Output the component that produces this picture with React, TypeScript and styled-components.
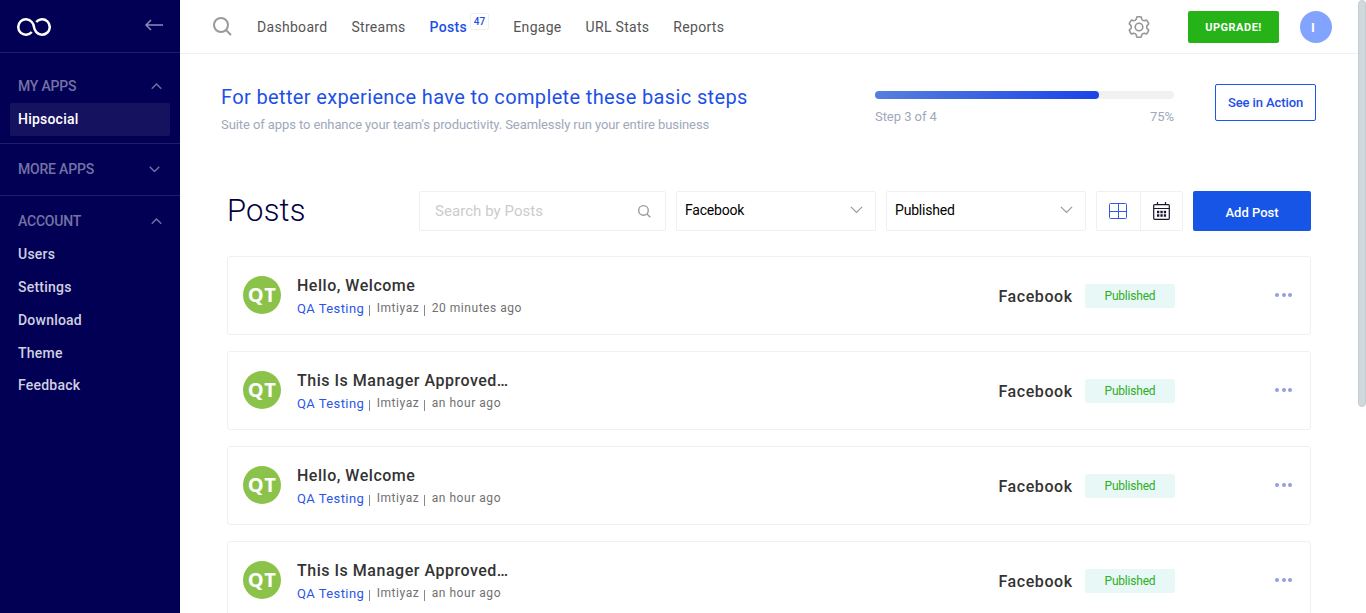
import React from 'react';
import styled, { createGlobalStyle } from 'styled-components';

const GlobalStyle = createGlobalStyle`
  * { box-sizing: border-box; }
  html, body { margin: 0; padding: 0; overflow: hidden; background: #fff; }
  body { font-family: Roboto, "Liberation Sans", sans-serif; font-size: 14px; color: #333; }
  svg { display: block; flex: none; }
  button { font-family: inherit; cursor: pointer; padding: 0; }
`;

const Page = styled.div`
  display: flex;
  width: 100%;
  height: 613px;
  overflow: hidden;
`;

/* Sidebar */
const Sidebar = styled.aside`
  width: 180px;
  flex: none;
  background: #020055;
`;
const Brand = styled.div`
  height: 53px;
  padding: 2px 17px 0;
  display: flex;
  justify-content: space-between;
  align-items: center;
  border-bottom: 1px solid #201e6b;
  svg + svg { margin-bottom: 4px; }
`;
const Section = styled.section<{ $top: number; $height?: number }>`
  height: ${p => (p.$height ? p.$height + 'px' : 'auto')};
  padding: ${p => p.$top}px 10px 0;
  border-bottom: ${p => (p.$height ? '1px solid #201e6b' : 'none')};
`;
const SectionHead = styled.div<{ $closed?: boolean }>`
  height: 33px;
  padding: 0 ${p => (p.$closed ? 10 : 8)}px 1px 8px;
  display: flex;
  justify-content: space-between;
  align-items: center;
  font-weight: 500;
  letter-spacing: -0.2px;
  color: #7472a3;
`;
const SideLink = styled.a<{ $active?: boolean }>`
  display: flex;
  align-items: center;
  height: ${p => (p.$active ? 33 : 32.75)}px;
  padding: 0 8px ${p => (p.$active ? 2 : 0)}px;
  border-radius: 2px;
  font-weight: 500;
  letter-spacing: 0.22px;
  color: ${p => (p.$active ? '#fff' : '#d0d0e0')};
  background: ${p => (p.$active ? '#151360' : 'transparent')};
`;

/* Main column */
const Main = styled.main`
  flex: 1;
  min-width: 0;
`;
const TopBar = styled.header`
  height: 54px;
  padding: 0 26px 0 33px;
  display: flex;
  align-items: center;
  border-bottom: 1px solid #f0f0f0;
`;
const Nav = styled.nav`
  display: flex;
  gap: 24px;
  margin-left: 25px;
  flex: 1;
`;
const NavItem = styled.a<{ $active?: boolean }>`
  display: flex;
  line-height: 20px;
  letter-spacing: 0.3px;
  font-weight: ${p => (p.$active ? 500 : 400)};
  color: ${p => (p.$active ? '#1e50e6' : '#555')};
`;
const Count = styled.span`
  width: 19px;
  height: 17px;
  margin: -4px 0.4px 0 3px;
  border: 1px solid #f0f0f0;
  border-radius: 2px;
  font-size: 10px;
  line-height: 16px;
  text-align: center;
  letter-spacing: 0;
`;
const UpgradeButton = styled.button`
  width: 91px;
  height: 32px;
  margin: 0 21px 0 38px;
  padding-top: 1px;
  border: 0;
  border-radius: 2px;
  background: #25b317;
  color: #fff;
  font-size: 11px;
  font-weight: 700;
  letter-spacing: 0.5px;
`;
const UserAvatar = styled.div`
  width: 32px;
  height: 32px;
  padding-right: 6px;
  border-radius: 50%;
  background: #82a4ff;
  color: #fff;
  font-size: 13px;
  font-weight: 700;
  line-height: 33px;
  text-align: center;
`;

const Onboarding = styled.section`
  display: flex;
  height: 137px;
  padding: 30px 42px 0 41px;
`;
const Intro = styled.div`
  width: 654px;
`;
const IntroTitle = styled.h2`
  margin: 0;
  font-size: 20px;
  line-height: 26px;
  font-weight: 400;
  letter-spacing: 0.36px;
  color: #1e50e6;
`;
const IntroText = styled.p`
  margin: 5px 0 0;
  font-size: 13px;
  line-height: 20px;
  letter-spacing: -0.09px;
  color: #a0a8bb;
`;
const Progress = styled.div`
  width: 299px;
  padding-top: 7px;
`;
const Track = styled.div`
  height: 8px;
  border-radius: 4px;
  background: #f1f1f1;
`;
const Fill = styled.div`
  width: 75%;
  height: 8px;
  border-radius: 4px;
  background: linear-gradient(135deg, #5681dc, #1a43e9);
`;
const ProgressLabels = styled.div`
  display: flex;
  justify-content: space-between;
  margin-top: 8px;
  font-size: 13px;
  line-height: 20px;
  letter-spacing: -0.05px;
  color: #a0a8bb;
`;
const ActionButton = styled.button`
  width: 101px;
  height: 37px;
  margin-left: 41px;
  border: 1px solid #1a56e8;
  border-radius: 2px;
  background: #fff;
  color: #1e50e6;
  font-size: 13px;
  font-weight: 500;
  letter-spacing: -0.1px;
`;

const Toolbar = styled.div`
  display: flex;
  align-items: center;
  height: 40px;
  padding: 0 47px;
`;
const Heading = styled.h1`
  width: 192px;
  margin: 0;
  padding-bottom: 1px;
  font-size: 31px;
  line-height: 39px;
  font-weight: 300;
  letter-spacing: 0.2px;
  color: #020042;
`;
const Field = styled.div<{ $width: number; $search?: boolean }>`
  width: ${p => p.$width}px;
  height: 40px;
  margin-right: 10px;
  padding: ${p => (p.$search ? '0 14px 0 15px' : '0 12px 2px 8px')};
  display: flex;
  justify-content: space-between;
  align-items: center;
  border: 1px solid #f0f0f0;
  border-radius: 2px;
  font-size: ${p => (p.$search ? 15 : 14)}px;
  letter-spacing: ${p => (p.$search ? 0.05 : -0.2)}px;
  color: ${p => (p.$search ? '#ccc' : '#000')};
`;
const ViewToggle = styled.div`
  display: flex;
  width: 87px;
  height: 40px;
  margin-right: 10px;
  border: 1px solid #f0f0f0;
  border-radius: 2px;
`;
const ViewOption = styled.span`
  width: 43px;
  padding: 0 1px 1px 0;
  display: flex;
  align-items: center;
  justify-content: center;
  & + & { width: 42px; padding: 0; border-left: 1px solid #f0f0f0; }
`;
const AddButton = styled.button`
  width: 118px;
  height: 40px;
  padding-top: 2px;
  border: 0;
  border-radius: 2px;
  background: #1655e6;
  color: #fff;
  font-size: 13px;
  font-weight: 500;
`;

const PostList = styled.div`
  display: flex;
  flex-direction: column;
  gap: 16px;
  padding: 25px 47px 0;
`;
const PostCard = styled.article`
  display: flex;
  height: 79px;
  padding: 0 18px 0 15px;
  border: 1px solid #f0f0f0;
  border-radius: 3px;
`;
const Avatar = styled.div`
  width: 38px;
  height: 38px;
  margin: 19px 16px 0 0;
  border-radius: 50%;
  background: #8bc34a;
  color: #fff;
  font: 700 20px/38px "Open Sans", sans-serif;
  letter-spacing: 0.4px;
  text-align: center;
`;
const PostBody = styled.div`
  width: 701px;
  padding-top: 18px;
`;
const PostTitle = styled.div`
  font-size: 16px;
  line-height: 22px;
  letter-spacing: 0.52px;
  font-weight: 500;
  color: #333;
`;
const Meta = styled.div`
  display: flex;
  padding-top: 1px;
  font-size: 12px;
  line-height: 20px;
  letter-spacing: 0.54px;
  color: #707070;
  white-space: pre;
`;
const Account = styled.span`
  padding-top: 1px;
  font-size: 13px;
  letter-spacing: 0.42px;
  color: #2a55e8;
`;
const Divider = styled.i`
  width: 1px;
  height: 11px;
  margin: 7px 6.5px 0 5px;
  background: #888;
`;
const Channel = styled.div`
  width: 87px;
  padding: 29px 0 0 0.4px;
  font-size: 16px;
  line-height: 22px;
  letter-spacing: 0.58px;
  font-weight: 500;
`;
const Status = styled.div`
  width: 90px;
  height: 24px;
  margin-top: 27px;
  border-radius: 3px;
  background: #e8f8f7;
  color: #2eae22;
  font-size: 12px;
  line-height: 24px;
  letter-spacing: -0.2px;
  text-align: center;
`;
const More = styled.div`
  display: flex;
  gap: 2.4px;
  margin: 36px 0 0 auto;
`;
const Dot = styled.i`
  width: 4px;
  height: 4px;
  border-radius: 50%;
  background: #939fdf;
`;
const ScrollThumb = styled.div`
  width: 8px;
  height: 407px;
  flex: none;
  border: 1px solid #c5cdd1;
  border-radius: 4px;
  background: #cfd8dc;
`;

const Chevron = ({ up, width = 11, color }: { up?: boolean; width?: number; color: string }) => (
  <svg width={width} height={width / 2 + 1} viewBox="0 0 12 7" fill="none" stroke={color} strokeWidth={width > 11 ? 1.1 : 1.5}>
    <path d={up ? 'M.8 6.2 6 1l5.2 5.2' : 'M.8.8 6 6 11.2.8'} />
  </svg>
);

const Magnifier = ({ size }: { size: number }) => (
  <svg width={size} height={size} viewBox="0 0 19 19" fill="none" stroke="#999" strokeWidth="2">
    <circle cx="8" cy="8" r="7" />
    <path d="m13 13 5 5" />
  </svg>
);

const Logo = () => (
  <svg width="34" height="18" viewBox="0 0 34 18" fill="none" stroke="#fff" strokeWidth="2.5">
    <path d="M14.8 14A7.7 7.7 0 1 1 14.8 4C16.5 5.8 16.7 7.4 17 9.1c.3 1.7.6 3.2 2.3 5A7.7 7.7 0 1 0 19.2 4" />
  </svg>
);

const BackArrow = () => (
  <svg width="18" height="12" viewBox="0 0 18 12" fill="none" stroke="#8d8bb8" strokeWidth="1.5">
    <path d="M18 6H1M6 1 1 6l5 5" />
  </svg>
);

/* Six rounded teeth around a hub */
const gearPoint = (radius: number, degrees: number) => {
  const a = (degrees * Math.PI) / 180;
  return `${(11 + radius * Math.sin(a)).toFixed(2)} ${(11 - radius * Math.cos(a)).toFixed(2)}`;
};
const gearPath =
  [0, 60, 120, 180, 240, 300]
    .map((t, i) =>
      [
        `${i ? 'L' : 'M'}${gearPoint(8.3, t - 19)}`,
        `L${gearPoint(10.2, t - 13)}`,
        `Q${gearPoint(10.5, t)} ${gearPoint(10.2, t + 13)}`,
        `L${gearPoint(8.3, t + 19)}`,
        `Q${gearPoint(7.2, t + 30)} ${gearPoint(8.3, t + 41)}`,
      ].join(''),
    )
    .join('') + 'Z';

const Gear = () => (
  <svg width="22" height="22" viewBox="0 0 22 22" fill="none" stroke="#969696" strokeWidth="1.6" strokeLinejoin="round">
    <path d={gearPath} />
    <circle cx="11" cy="11" r="3.8" />
  </svg>
);

const GridIcon = () => (
  <svg width="18" height="16" viewBox="0 0 18 16" fill="none" stroke="#3559df" strokeWidth="1">
    <rect x=".5" y=".5" width="17" height="15" rx="1" />
    <path d="M9.5.5v15M.5 8.5h17" />
  </svg>
);

const CalendarIcon = () => (
  <svg width="17" height="18" viewBox="0 0 17 18" fill="none" stroke="#17152f" strokeWidth="1.2">
    <rect x=".7" y="2.6" width="15.6" height="14.7" rx="1" />
    <path d="M.7 6.5h15.6M4.5 0v3M12.5 0v3" />
    <path d="M4 10h2.3M7.4 10h2.3M10.8 10h2.3M4 13.5h2.3M7.4 13.5h2.3M10.8 13.5h2.3" strokeWidth="2.3" />
  </svg>
);

const navItems = ['Dashboard', 'Streams', 'Posts', 'Engage', 'URL Stats', 'Reports'];
const accountLinks = ['Users', 'Settings', 'Download', 'Theme', 'Feedback'];
const posts = [
  { title: 'Hello, Welcome', time: '20 minutes ago' },
  { title: 'This Is Manager Approved…', time: 'an hour ago' },
  { title: 'Hello, Welcome', time: 'an hour ago' },
  { title: 'This Is Manager Approved…', time: 'an hour ago' },
];

export default function App() {
  return (
    <Page>
      <GlobalStyle />
      <Sidebar>
        <Brand><Logo /><BackArrow /></Brand>
        <Section $top={17} $height={91}>
          <SectionHead>MY APPS<Chevron up color="#7472a3" /></SectionHead>
          <SideLink $active>Hipsocial</SideLink>
        </Section>
        <Section $top={9} $height={52}>
          <SectionHead $closed>MORE APPS<Chevron color="#7472a3" /></SectionHead>
        </Section>
        <Section $top={9}>
          <SectionHead>ACCOUNT<Chevron up color="#7472a3" /></SectionHead>
          {accountLinks.map(l => <SideLink key={l}>{l}</SideLink>)}
        </Section>
      </Sidebar>
      <Main>
        <TopBar>
          <Magnifier size={19} />
          <Nav>
            {navItems.map(n => (
              <NavItem key={n} $active={n === 'Posts'}>{n}{n === 'Posts' && <Count>47</Count>}</NavItem>
            ))}
          </Nav>
          <Gear />
          <UpgradeButton>UPGRADE!</UpgradeButton>
          <UserAvatar>I</UserAvatar>
        </TopBar>
        <Onboarding>
          <Intro>
            <IntroTitle>For better experience have to complete these basic steps</IntroTitle>
            <IntroText>Suite of apps to enhance your team's productivity. Seamlessly run your entire business</IntroText>
          </Intro>
          <Progress>
            <Track><Fill /></Track>
            <ProgressLabels><span>Step 3 of 4</span><span>75%</span></ProgressLabels>
          </Progress>
          <ActionButton>See in Action</ActionButton>
        </Onboarding>
        <Toolbar>
          <Heading>Posts</Heading>
          <Field $width={247} $search>Search by Posts<Magnifier size={13} /></Field>
          <Field $width={200}>Facebook<Chevron width={13} color="#999" /></Field>
          <Field $width={200}>Published<Chevron width={13} color="#999" /></Field>
          <ViewToggle>
            <ViewOption><GridIcon /></ViewOption>
            <ViewOption><CalendarIcon /></ViewOption>
          </ViewToggle>
          <AddButton>Add Post</AddButton>
        </Toolbar>
        <PostList>
          {posts.map((p, i) => (
            <PostCard key={i}>
              <Avatar>QT</Avatar>
              <PostBody>
                <PostTitle>{p.title}</PostTitle>
                <Meta>
                  <Account>QA Testing</Account><Divider />
                  <span>Imtiyaz</span><Divider />
                  <span>{p.time}</span>
                </Meta>
              </PostBody>
              <Channel>Facebook</Channel>
              <Status>Published</Status>
              <More><Dot /><Dot /><Dot /></More>
            </PostCard>
          ))}
        </PostList>
      </Main>
      <ScrollThumb />
    </Page>
  );
}
